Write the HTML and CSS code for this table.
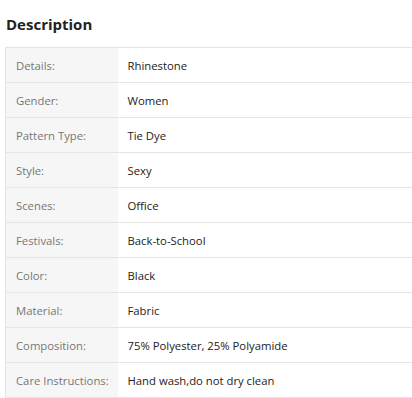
FILE: index.html
```html
<!DOCTYPE html>
<html lang="en">
<head>
    <meta charset="UTF-8">
    <meta name="viewport" content="width=device-width, initial-scale=1.0">
    <title>Description</title>
    <link rel="stylesheet" href="styles.css">
</head>
<body>
    <div class="description">
        <h2>Description</h2>
        <table class="attr-table">
            <colgroup>
                <col class="key-col">
                <col>
            </colgroup>
            <tr><td class="attr-key">Details:</td><td class="attr-value">Rhinestone</td></tr>
            <tr><td class="attr-key">Gender:</td><td class="attr-value">Women</td></tr>
            <tr><td class="attr-key">Pattern Type:</td><td class="attr-value">Tie Dye</td></tr>
            <tr><td class="attr-key">Style:</td><td class="attr-value">Sexy</td></tr>
            <tr><td class="attr-key">Scenes:</td><td class="attr-value">Office</td></tr>
            <tr><td class="attr-key">Festivals:</td><td class="attr-value">Back-to-School</td></tr>
            <tr><td class="attr-key">Color:</td><td class="attr-value">Black</td></tr>
            <tr><td class="attr-key">Material:</td><td class="attr-value">Fabric</td></tr>
            <tr><td class="attr-key">Composition:</td><td class="attr-value">75% Polyester, 25% Polyamide</td></tr>
            <tr><td class="attr-key">Care Instructions:</td><td class="attr-value">Hand wash,do not dry clean</td></tr>
        </table>
    </div>
</body>
</html>
```

FILE: styles.css
```css
body {
    margin: 0;
    background: #fff;
    font-family: "Open Sans", "Noto Sans", sans-serif;
    color: #222;
}

/* description block */
.description {
    padding: 0 0 0 5px;
}

.description h2 {
    font-size: 15px;
    font-weight: 700;
    color: #222;
    margin: 0;
    padding: 13px 0 0 1px;
    height: 34px;
    line-height: 22px;
    box-sizing: border-box;
}

/* attribute table */
.attr-table {
    width: 100%;
    table-layout: fixed;
    border-collapse: collapse;
    font-size: 11.3px;
    margin-top: 13px;
}

.attr-table .key-col {
    width: 112px;
}

.attr-table td {
    height: 34px;
    padding: 0 10px;
    border-top: 1px solid #e5e5e5;
    border-bottom: 1px solid #e5e5e5;
    vertical-align: middle;
    white-space: nowrap;
}

.attr-table .attr-key {
    background: #f6f6f6;
    color: #777;
    border-left: 1px solid #e5e5e5;
}

.attr-table .attr-value {
    color: #222;
}
```
